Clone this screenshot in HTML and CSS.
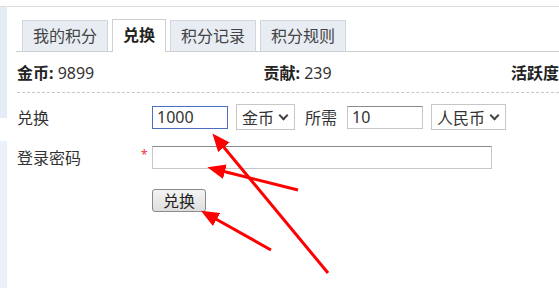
FILE: index.html
```html
<!DOCTYPE html>
<html lang="zh">
<head>
<meta charset="utf-8">
<link rel="stylesheet" href="styles.css">
</head>
<body>
<div class="page">
  <div class="side">
    <div class="side-a"></div>
    <div class="side-b"></div>
  </div>
  <div class="main">
    <ul class="tabs">
      <li class="tab">我的积分</li>
      <li class="tab active">兑换</li>
      <li class="tab">积分记录</li>
      <li class="tab">积分规则</li>
    </ul>
    <div class="stats">
      <div class="stat s1"><b>金币:</b> 9899</div>
      <div class="stat s2"><b>贡献:</b> 239</div>
      <div class="stat s3"><b>活跃度</b></div>
    </div>
    <div class="form">
      <div class="row">
        <label class="lbl">兑换</label>
        <span class="star"></span>
        <input class="ipt focus" type="text" value="1000">
        <div class="sel w58">金币<span class="chev"></span></div>
        <span class="need">所需</span>
        <input class="ipt" type="text" value="10">
        <div class="sel w75">人民币<span class="chev"></span></div>
      </div>
      <div class="row r2">
        <label class="lbl">登录密码</label>
        <span class="star">*</span>
        <input class="ipt pw" type="password">
      </div>
      <div class="row r3">
        <span class="lbl"></span>
        <span class="star"></span>
        <button class="btn">兑换</button>
      </div>
    </div>
  </div>
  <svg class="arrows" width="559" height="288" viewBox="0 0 559 288">
    <defs>
      <marker id="ah" markerWidth="6" markerHeight="5" refX="1" refY="2.5" orient="auto" markerUnits="strokeWidth">
        <path d="M0,0 L6,2.5 L0,5 Z" fill="#f00"/>
      </marker>
    </defs>
    <line x1="328" y1="273" x2="222" y2="145" stroke="#f00" stroke-width="3" marker-end="url(#ah)"/>
    <line x1="298" y1="190" x2="222" y2="171" stroke="#f00" stroke-width="3" marker-end="url(#ah)"/>
    <line x1="271" y1="250" x2="214" y2="218" stroke="#f00" stroke-width="3" marker-end="url(#ah)"/>
  </svg>
</div>
</body>
</html>
```
FILE: styles.css
```css
html, body {
  margin: 0;
  padding: 0;
  background: #fff;
}
.page {
  position: relative;
  width: 559px;
  height: 288px;
  overflow: hidden;
  display: flex;
  border-top: 1px solid #dcdcdc;
  margin-top: 6px;
  font-family: "Noto Sans", "Noto Sans CJK SC", sans-serif;
  color: #333;
  font-size: 16px;
}
.side {
  width: 7px;
  flex: none;
  display: flex;
  flex-direction: column;
}
.side-a {
  height: 111px;
  background: #e4ecf5;
}
.side-b {
  margin-top: 23px;
  flex: 1;
  background: #eaf1f9;
}
.main {
  flex: 1;
  padding-left: 10px;
  min-width: 0;
}
.tabs {
  list-style: none;
  margin: 12px 0 0 -1px;
  padding: 0 0 0 6px;
  display: flex;
  gap: 4px;
  border-bottom: 1px solid #cfcfcf;
  height: 32px;
}
.tab {
  height: 31px;
  line-height: 30px;
  box-sizing: border-box;
  padding: 0 10px;
  background: #e8edf3;
  border: 1px solid #d3d7dc;
  border-bottom: none;
  font-size: 16px;
  color: #444;
  margin-top: 1px;
}
.tab.active {
  background: #fff;
  font-weight: bold;
  color: #222;
  border-color: #cfcfcf;
  height: 33px;
  margin-top: 0;
}
.stats {
  display: flex;
  height: 40px;
  align-items: center;
  border-bottom: 1px dashed #c8c8c8;
  white-space: nowrap;
  font-size: 16px;
  color: #333;
}
.stat b { color: #222; }
.s1 { width: 247px; }
.s2 { width: 248px; }
.form {
  padding-top: 11px;
}
.row {
  display: flex;
  align-items: center;
  height: 26px;
}
.r2 { margin-top: 14px; }
.r3 { margin-top: 17px; }
.lbl {
  width: 124px;
  font-size: 16px;
  color: #333;
}
.star {
  width: 11px;
  color: #e33;
  font-size: 12px;
  align-self: flex-start;
  padding-top: 2px;
}
.ipt {
  box-sizing: border-box;
  width: 76px;
  height: 23px;
  border: 1px solid #c6c6c6;
  border-top-color: #8a8a8a;
  padding: 0 4px;
  font-family: "Noto Sans", sans-serif;
  font-size: 16px;
  color: #333;
  outline: none;
}
.ipt.focus {
  border: 1px solid #4a6fbf;
}
.pw {
  width: 340px;
}
.sel {
  box-sizing: border-box;
  height: 26px;
  margin-left: 8px;
  border: 1px solid #c6c6c6;
  display: flex;
  align-items: center;
  padding-left: 5px;
  font-size: 16px;
  color: #333;
  background: #fff;
}
.w58 { width: 59px; }
.w75 { width: 75px; }
.chev {
  width: 5px;
  height: 5px;
  border-right: 2px solid #444;
  border-bottom: 2px solid #444;
  transform: rotate(45deg);
  margin: -4px 0 0 6px;
}
.need {
  margin: 0 10px 0 10px;
  font-size: 16px;
}
.btn {
  box-sizing: border-box;
  width: 54px;
  height: 23px;
  padding: 0;
  border: 1px solid #8a8a8a;
  border-radius: 3px;
  background: linear-gradient(#f4f4f4, #dedede);
  font-family: "Noto Sans CJK SC", sans-serif;
  font-size: 16px;
  line-height: 20px;
  color: #222;
}
.arrows {
  position: absolute;
  left: 0;
  top: -7px;
  pointer-events: none;
}
```
